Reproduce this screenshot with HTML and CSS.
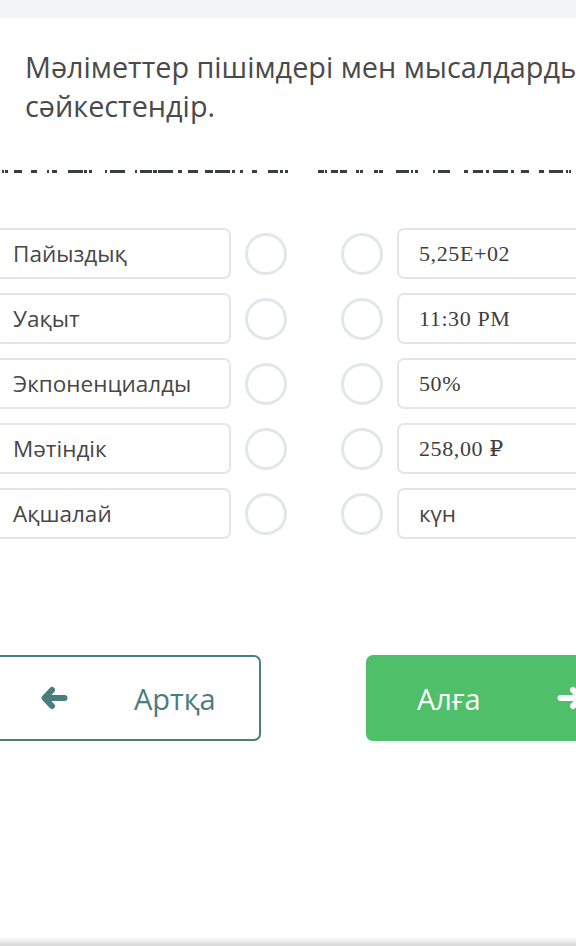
FILE: index.html
```html
<!DOCTYPE html>
<html lang="kk">
<head>
<meta charset="utf-8">
<title>Сәйкестендір</title>
<link rel="stylesheet" href="styles.css">
</head>
<body>
<div class="topbar"></div>
<h1 class="title"><span class="line">Мәліметтер пішімдері мен мысалдарды</span><br><span class="line">сәйкестендір.</span></h1>
<svg class="cut" width="576" height="3" viewBox="0 0 576 3" aria-hidden="true">
  <g fill="#3a3d41">
    <rect x="2" y="0" width="2" height="3"/><rect x="5" y="0" width="3" height="3"/><rect x="14" y="0" width="8" height="3"/><rect x="31" y="0" width="6" height="3"/><rect x="47" y="0" width="2" height="3"/><rect x="52" y="0" width="5" height="3"/><rect x="68" y="0" width="15" height="3"/><rect x="84" y="0" width="3" height="3"/><rect x="89" y="0" width="3" height="3"/><rect x="105" y="0" width="2" height="3"/><rect x="110" y="0" width="15" height="3"/><rect x="135" y="0" width="2" height="3"/><rect x="140" y="0" width="12" height="3"/><rect x="153" y="0" width="4" height="3"/><rect x="158" y="0" width="15" height="3"/><rect x="178" y="0" width="4" height="3"/><rect x="188" y="0" width="10" height="3"/><rect x="205" y="0" width="8" height="3"/><rect x="215" y="0" width="15" height="3"/><rect x="232" y="0" width="3" height="3"/><rect x="240" y="0" width="3" height="3"/><rect x="252" y="0" width="5" height="3"/><rect x="268" y="0" width="10" height="3"/><rect x="280" y="0" width="3" height="3"/><rect x="285" y="0" width="3" height="3"/>
    <rect x="318" y="0" width="6" height="3"/><rect x="325" y="0" width="2" height="3"/><rect x="331" y="0" width="7" height="3"/><rect x="340" y="0" width="7" height="3"/><rect x="356" y="0" width="3" height="3"/><rect x="360" y="0" width="3" height="3"/><rect x="374" y="0" width="4" height="3"/><rect x="379" y="0" width="4" height="3"/><rect x="396" y="0" width="13" height="3"/><rect x="411" y="0" width="2" height="3"/><rect x="415" y="0" width="3" height="3"/><rect x="433" y="0" width="2" height="3"/><rect x="438" y="0" width="12" height="3"/><rect x="464" y="0" width="4" height="3"/><rect x="473" y="0" width="10" height="3"/><rect x="486" y="0" width="3" height="3"/><rect x="493" y="0" width="15" height="3"/><rect x="511" y="0" width="3" height="3"/><rect x="521" y="0" width="8" height="3"/><rect x="539" y="0" width="5" height="3"/><rect x="549" y="0" width="14" height="3"/><rect x="566" y="0" width="2" height="3"/><rect x="569" y="0" width="2" height="3"/>
  </g>
</svg>
<div class="match">
  <div class="row">
    <div class="box left">Пайыздық</div><span class="dot"></span><span class="dot dot-r"></span><div class="box right serif">5,25E+02</div>
  </div>
  <div class="row">
    <div class="box left">Уақыт</div><span class="dot"></span><span class="dot dot-r"></span><div class="box right serif">11:30 PM</div>
  </div>
  <div class="row">
    <div class="box left">Экпоненциалды</div><span class="dot"></span><span class="dot dot-r"></span><div class="box right serif">50%</div>
  </div>
  <div class="row">
    <div class="box left">Мәтіндік</div><span class="dot"></span><span class="dot dot-r"></span><div class="box right serif">258,00 ₽</div>
  </div>
  <div class="row">
    <div class="box left">Ақшалай</div><span class="dot"></span><span class="dot dot-r"></span><div class="box right">күн</div>
  </div>
</div>
<div class="nav">
  <button class="btn back" type="button">
    <svg class="ico" width="28" height="24" viewBox="0 0 28 24" aria-hidden="true"><path d="M12 4 L4.5 12 L12 20 M6 12 H24.5" fill="none" stroke="currentColor" stroke-width="6" stroke-linecap="round" stroke-linejoin="round"/></svg>
    <span class="btn-text">Артқа</span>
  </button>
  <button class="btn next" type="button">
    <span class="btn-text">Алға</span>
    <svg class="ico" width="28" height="24" viewBox="0 0 28 24" aria-hidden="true"><path d="M16 4 L23.5 12 L16 20 M22 12 H3.5" fill="none" stroke="currentColor" stroke-width="6" stroke-linecap="round" stroke-linejoin="round"/></svg>
  </button>
</div>
<div class="bottom-shade"></div>
</body>
</html>
```
FILE: styles.css
```css
html, body {
  margin: 0;
  padding: 0;
}
body {
  width: 576px;
  height: 946px;
  overflow: hidden;
  background: #ffffff;
  font-family: "Open Sans", "Noto Sans", sans-serif;
  color: #4b4b4b;
  position: relative;
}
.topbar {
  height: 18px;
  background: #f3f4f6;
}
.title {
  margin: 29px 0 0 25px;
  font-size: 28.8px;
  font-weight: 400;
  line-height: 39px;
  color: #4a4a4a;
  white-space: nowrap;
}
.cut {
  display: block;
  margin-top: 45px;
}
.match {
  margin: 55px 0 0 -9px;
  display: flex;
  flex-direction: column;
  gap: 14px;
}
.row {
  display: flex;
  align-items: center;
  height: 51px;
}
.box {
  box-sizing: border-box;
  height: 51px;
  border: 2px solid #e3e6e9;
  border-radius: 7px;
  display: flex;
  align-items: center;
  font-size: 22.5px;
  color: #474747;
  background: #fff;
  flex: none;
}
.left {
  width: 240px;
  padding-left: 20px;
}
.right {
  width: 200px;
  padding-left: 20px;
  margin-left: 14px;
}
.serif {
  font-family: "Liberation Serif", "DejaVu Serif", serif;
  font-size: 22px;
  letter-spacing: 0.6px;
  color: #3e3e3e;
}
.dot {
  box-sizing: border-box;
  flex: none;
  width: 42px;
  height: 42px;
  border: 3px solid #e3e6e8;
  border-radius: 50%;
  margin-left: 14px;
}
.dot-r {
  margin-left: 54px;
}
.nav {
  display: flex;
  margin: 116px 0 0 -20px;
  gap: 105px;
}
.btn {
  box-sizing: border-box;
  height: 86px;
  border-radius: 7px;
  font-family: "Open Sans", "Noto Sans", sans-serif;
  font-size: 29px;
  display: flex;
  align-items: center;
  padding: 0;
  flex: none;
}
.back {
  width: 281px;
  background: #fff;
  border: 2px solid #4b7c80;
  color: #4b7c80;
  padding-left: 58px;
}
.back .btn-text {
  margin-left: 66px;
}
.next {
  width: 240px;
  background: #4fbf6a;
  border: none;
  color: #fff;
  padding-left: 51px;
}
.next .ico {
  margin-left: 76px;
}
.bottom-shade {
  position: absolute;
  left: 0;
  right: 0;
  bottom: 0;
  height: 9px;
  background: linear-gradient(to bottom, rgba(220,220,220,0), #d6d6d6);
}
```
